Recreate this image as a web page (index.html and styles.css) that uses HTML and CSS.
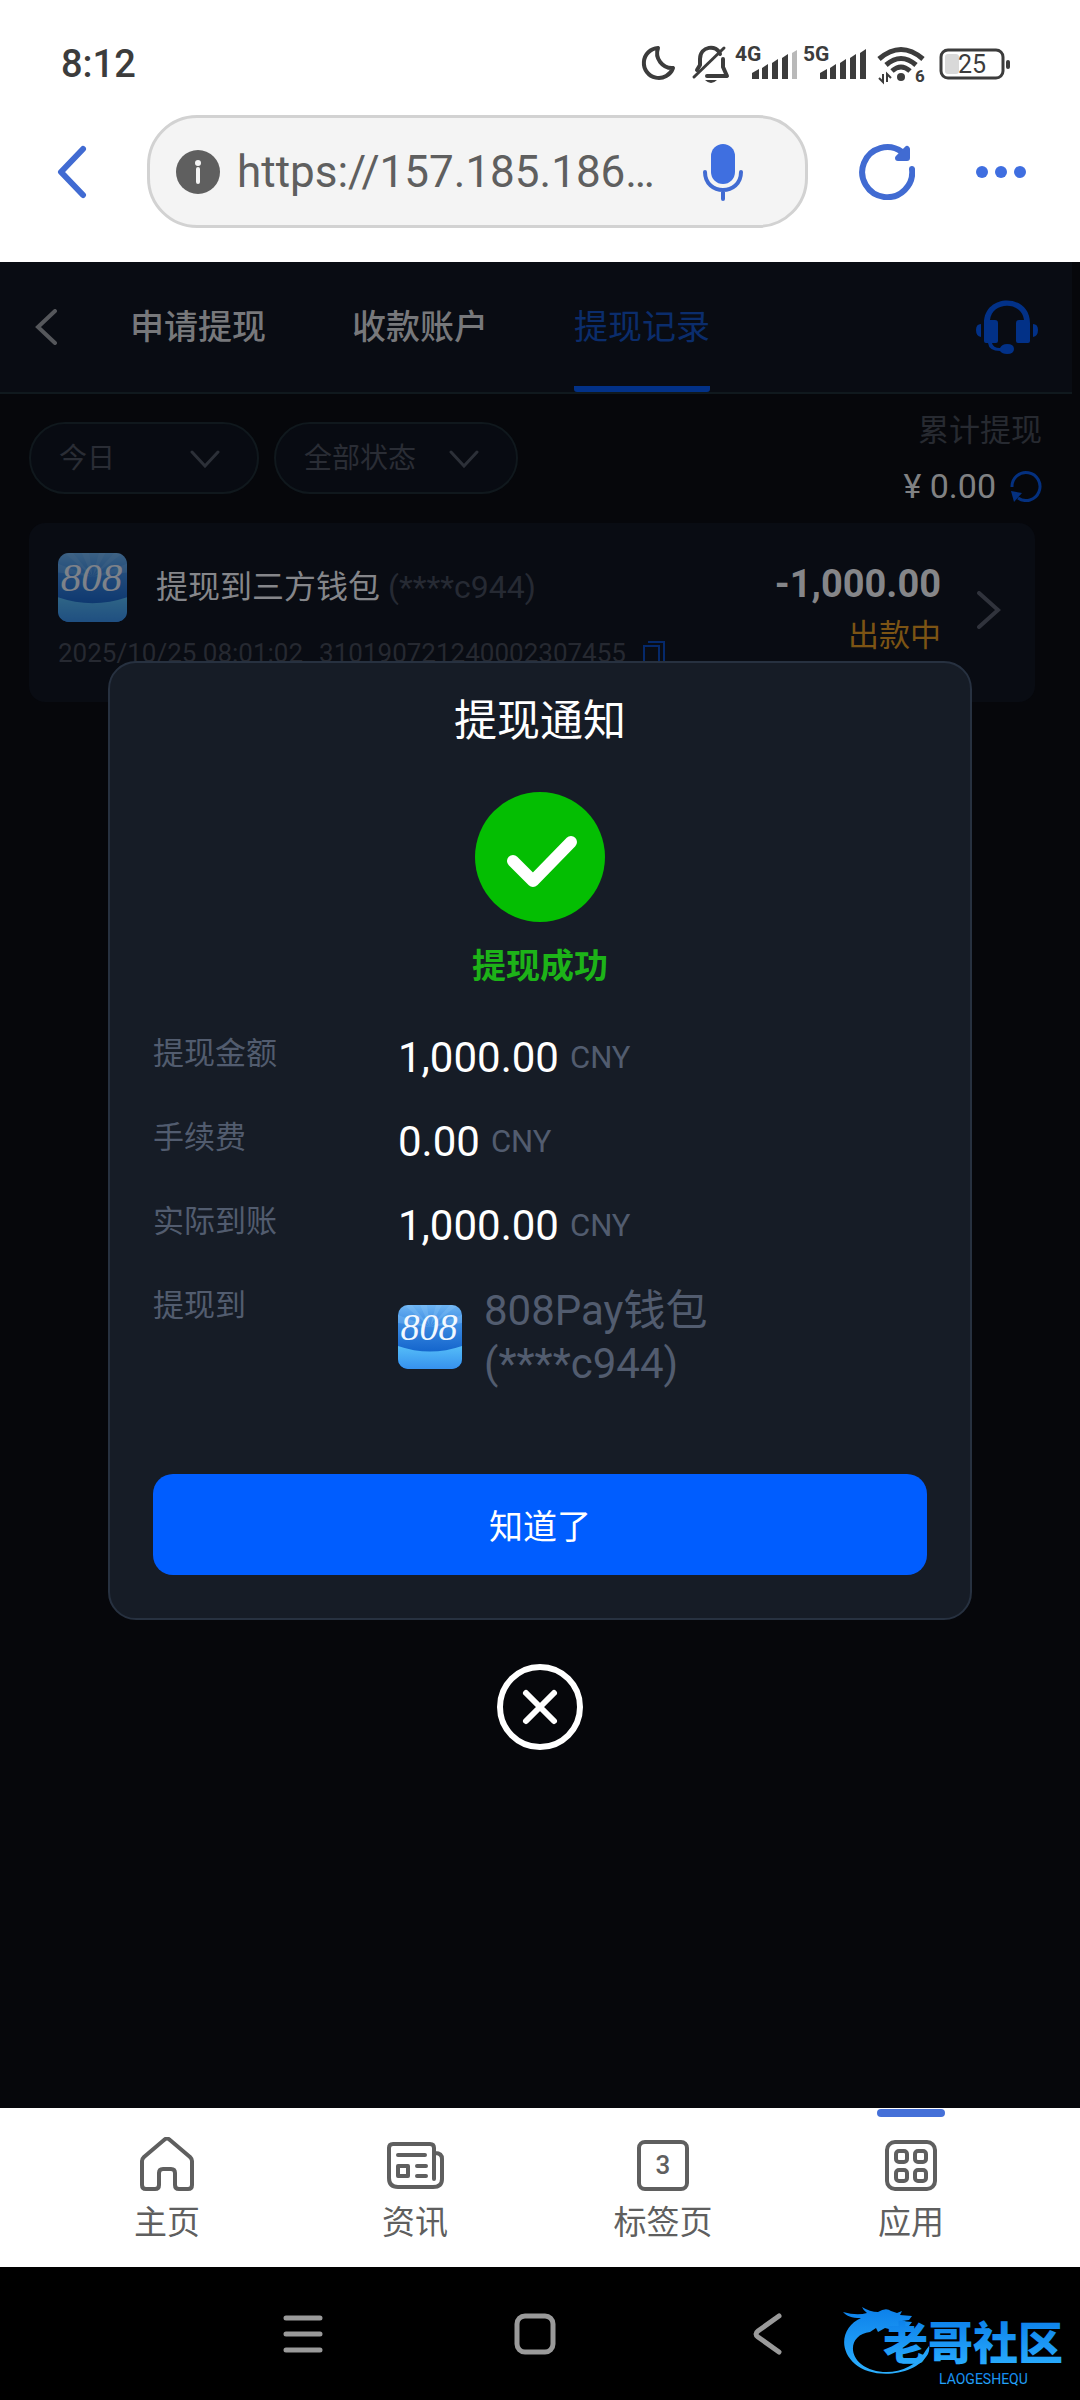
FILE: index.html
```html
<!DOCTYPE html>
<html lang="zh-CN">
<head>
<meta charset="utf-8">
<meta name="viewport" content="width=device-width, initial-scale=1">
<title>提现记录</title>
<link rel="stylesheet" href="styles.css">
</head>
<body>
<svg class="defs" width="0" height="0" aria-hidden="true">
  <defs>
    <linearGradient id="sky" x1="0" y1="0" x2="0" y2="1">
      <stop offset="0" stop-color="#6db4f3"/>
      <stop offset="0.3" stop-color="#3b8be2"/>
      <stop offset="0.75" stop-color="#1263cb"/>
    </linearGradient>
    <linearGradient id="sea" x1="0" y1="0" x2="0" y2="1">
      <stop offset="0" stop-color="#55bdf8"/>
      <stop offset="1" stop-color="#3691ee"/>
    </linearGradient>
    <linearGradient id="brand" x1="0" y1="0" x2="0" y2="1">
      <stop offset="0" stop-color="#0c80ea"/>
      <stop offset="1" stop-color="#2cb0ff"/>
    </linearGradient>
    <symbol id="wallet" viewBox="0 0 64 64">
      <clipPath id="tile"><rect width="64" height="64" rx="10"/></clipPath>
      <g clip-path="url(#tile)">
        <rect width="64" height="64" fill="url(#sky)"/>
        <path d="M32 22 6 0h8zM32 22 22 0h7zM32 22 38 0h6zM32 22 52 0h8zM32 22 0 10v8zM32 22 64 10v8z" fill="#8cc8fa" opacity=".3"/>
        <path d="M0 41q32 11 64 0v23H0z" fill="url(#sea)"/>
        <text x="31" y="35" text-anchor="middle" class="wallet-mark">808</text>
      </g>
    </symbol>
  </defs>
</svg>

<header class="browser">
  <div class="status">
    <span class="clock">8:12</span>
    <svg class="status-icons" width="370" height="60" viewBox="0 -10 370 60" aria-hidden="true">
      <g fill="none" stroke="#3c3c3c" stroke-width="4" stroke-linecap="round" stroke-linejoin="round">
        <path d="M17 4a15 15 0 1 0 15 20a15 15 0 0 1-15-20z"/>
        <path d="M56 26 59 21v-6c0-13 17-15 20-5M82 15v8l4 9H66"/>
        <path d="M83 4 53 33" stroke-width="3"/>
      </g>
      <path d="M64 36h12q-6 6-12 0z" fill="#3c3c3c"/>
      <text x="94" y="17" class="net">4G</text>
      <g fill="#3c3c3c">
        <path d="M111 29l7-4v10h-7zM121 24l6-4v15h-6zM131 19l6-4v20h-6zM141 14l6-4v25h-6z"/>
        <path d="M151 9l5-3v29h-5z" fill="#b9b9b9"/>
        <path d="M179 29l7-4v10h-7zM189 24l6-4v15h-6zM199 19l6-4v20h-6zM209 14l6-4v25h-6zM219 9l6-4v30h-6z"/>
      </g>
      <text x="162" y="17" class="net">5G</text>
      <g fill="none" stroke="#3c3c3c" stroke-width="5">
        <path d="M238 15q22-19 44 0M245 21q15-13 30 0M251 27q9-8 18 0"/>
      </g>
      <circle cx="260" cy="33" r="4" fill="#3c3c3c"/>
      <path d="M242 30v8l-4-4M246 38v-8l4 4" fill="none" stroke="#3c3c3c" stroke-width="2"/>
      <text x="274" y="38" class="net-small">6</text>
      <rect x="300" y="6" width="62" height="28" rx="7" fill="none" stroke="#3c3c3c" stroke-width="3"/>
      <rect x="304" y="10" width="14" height="20" rx="3" fill="#d9d9d9"/>
      <rect x="365" y="16" width="4" height="9" rx="2" fill="#3c3c3c"/>
      <text x="331" y="29" text-anchor="middle" class="battery">25</text>
    </svg>
  </div>
  <div class="toolbar">
    <button class="icon-btn" aria-label="返回">
      <svg width="30" height="54" viewBox="0 0 30 54"><path d="M26 4 4 27l22 23" fill="none" stroke="#416bd2" stroke-width="6" stroke-linecap="round" stroke-linejoin="round"/></svg>
    </button>
    <div class="address">
      <svg width="44" height="44" viewBox="0 0 44 44" aria-hidden="true"><circle cx="22" cy="22" r="22" fill="#5f5f5f"/><path d="M22 19v13" stroke="#f4f4f4" stroke-width="4" stroke-linecap="round"/><circle cx="22" cy="13" r="3" fill="#f4f4f4"/></svg>
      <input class="url" type="text" aria-label="网址" value="https://157.185.186…">
      <button class="icon-btn" aria-label="语音输入">
        <svg width="40" height="58" viewBox="0 0 40 58"><rect x="8" y="1" width="24" height="40" rx="12" fill="#3f6fe0"/><path d="M2 29c0 24 36 24 36 0M20 48v8" fill="none" stroke="#416bd2" stroke-width="4" stroke-linecap="round"/></svg>
      </button>
    </div>
    <button class="icon-btn refresh" aria-label="刷新">
      <svg width="56" height="56" viewBox="0 0 56 56" fill="none" stroke="#416bd2" stroke-width="6" stroke-linecap="round" stroke-linejoin="round"><path d="M53 25A25 25 0 1 1 43 8"/><path d="M48 5v9h-9l4-4z"/></svg>
    </button>
    <button class="icon-btn more" aria-label="更多">
      <svg width="52" height="14" viewBox="0 0 52 14" fill="#3f6ee0"><circle cx="7" cy="7" r="6"/><circle cx="26" cy="7" r="6"/><circle cx="45" cy="7" r="6"/></svg>
    </button>
  </div>
</header>

<main class="page">
  <div class="sheet">
    <nav class="tabs">
      <a class="tabs-back" href="#" aria-label="返回"><svg width="22" height="36" viewBox="0 0 22 36"><path d="M20 2 3 18l17 16" fill="none" stroke="#55575b" stroke-width="4" stroke-linecap="round"/></svg></a>
      <a class="tab" href="#">申请提现</a>
      <a class="tab" href="#">收款账户</a>
      <a class="tab tab-on" href="#" aria-current="page">提现记录</a>
      <a class="support" href="#" aria-label="客服"><svg width="62" height="56" viewBox="0 0 62 56" fill="#023187"><path d="M8 42V24C8-6 54-6 54 24v18q0 2-2 2H42q-2 0-2-2V24q0-3 3-3h5C46 2 16 2 14 21h5q3 0 3 3v18q0 2-2 2h-4q1 5 8 5 2-4 7-4 7 0 7 5t-7 5q-5 0-7-3-11 0-12-8H10q-2 0-2-2z"/><path d="M5 25v13q-5-1-5-7t5-6zM57 25v13q5-1 5-7t-5-6z"/></svg></a>
    </nav>
    <section class="filters">
      <div class="select-wrap">
        <select class="select select-day" aria-label="日期"><option>今日</option></select>
        <svg class="caret" width="30" height="18" viewBox="0 0 30 18" aria-hidden="true"><path d="M2 2l13 14L28 2"/></svg>
      </div>
      <div class="select-wrap">
        <select class="select select-state" aria-label="状态"><option>全部状态</option></select>
        <svg class="caret" width="30" height="18" viewBox="0 0 30 18" aria-hidden="true"><path d="M2 2l13 14L28 2"/></svg>
      </div>
      <div class="total">
        <div class="total-label">累计提现</div>
        <div class="total-value">¥ 0.00
          <button class="icon-btn" aria-label="刷新金额"><svg width="32" height="32" viewBox="0 0 32 32"><path d="M2 17A14 14 0 1 1 8 28" fill="none" stroke="#04307f" stroke-width="3"/><path d="M1 21l11 2-8 9z" fill="#04307f"/></svg></button>
        </div>
      </div>
    </section>
    <article class="record">
      <div class="record-main">
        <div class="record-head">
          <svg class="record-logo" width="69" height="69" aria-hidden="true"><use href="#wallet"/></svg>
          <h2 class="record-title">提现到三方钱包 <span class="dim">(****c944)</span></h2>
        </div>
        <div class="record-meta">
          <time>2025/10/25 08:01:02</time>
          <span>310190721240002307455</span>
          <button class="icon-btn" aria-label="复制"><svg width="24" height="28" viewBox="0 0 24 28" fill="none" stroke="#05296b" stroke-width="2"><rect x="2" y="7" width="15" height="19"/><path d="M6 3h16v20"/></svg></button>
        </div>
      </div>
      <div class="record-side">
        <div class="record-amount">-1,000.00</div>
        <div class="record-state">出款中</div>
      </div>
      <svg width="24" height="38" viewBox="0 0 24 38" aria-hidden="true"><path d="M2 2l19 17L2 36" fill="none" stroke="#30333c" stroke-width="4" stroke-linecap="round"/></svg>
    </article>
  </div>

  <div class="overlay">
    <section class="dialog" role="dialog" aria-labelledby="notice">
      <h1 class="dialog-title" id="notice">提现通知</h1>
      <svg class="ok" width="130" height="130" viewBox="0 0 130 130" aria-hidden="true"><circle cx="65" cy="65" r="65" fill="#04be02"/><path d="M38 69l20 20 38-39" fill="none" stroke="#fff" stroke-width="12" stroke-linecap="round" stroke-linejoin="round"/></svg>
      <p class="ok-text">提现成功</p>
      <dl class="details">
        <dt>提现金额</dt><dd>1,000.00 <small>CNY</small></dd>
        <dt>手续费</dt><dd>0.00 <small>CNY</small></dd>
        <dt>实际到账</dt><dd>1,000.00 <small>CNY</small></dd>
        <dt>提现到</dt>
        <dd class="payee">
          <svg width="64" height="64" aria-hidden="true"><use href="#wallet"/></svg>
          <span>808Pay钱包<br>(****c944)</span>
        </dd>
      </dl>
      <button class="confirm">知道了</button>
    </section>
    <button class="close" aria-label="关闭">
      <svg width="86" height="86" viewBox="0 0 86 86" fill="none" stroke="#fff" stroke-width="6" stroke-linecap="round"><circle cx="43" cy="43" r="40"/><path d="M29 29l28 28M57 29 29 57"/></svg>
    </button>
  </div>
</main>

<nav class="dock">
  <a class="dock-item" href="#">
    <svg width="58" height="56" viewBox="0 0 58 56"><path d="M26 3q3-3 6 0l20 17q2 2 2 4v24q0 4-4 4H41q-4 0-4-4V36q0-4-4-4h-8q-4 0-4 4v12q0 4-4 4H8q-4 0-4-4V24q0-2 2-4z"/></svg>
    主页
  </a>
  <a class="dock-item" href="#">
    <svg width="58" height="56" viewBox="0 0 58 56"><path d="M48 42V11q0-4-4-4H7q-4 0-4 4v30q0 9 9 9h35q9 0 9-8V22q0-6-7-6M12 18h27M31 29h9M31 39h9"/><rect x="12" y="29" width="10" height="10"/></svg>
    资讯
  </a>
  <a class="dock-item" href="#">
    <svg width="58" height="56" viewBox="0 0 58 56"><rect x="5" y="5" width="48" height="47" rx="6"/><text x="29" y="37" text-anchor="middle" class="tab-count">3</text></svg>
    标签页
  </a>
  <a class="dock-item dock-on" href="#">
    <svg width="58" height="56" viewBox="0 0 58 56"><rect x="5" y="5" width="48" height="47" rx="8"/><g><rect x="14" y="14" width="11" height="11" rx="3"/><rect x="33" y="14" width="11" height="11" rx="3"/><rect x="14" y="33" width="11" height="11" rx="3"/><rect x="33" y="33" width="11" height="11" rx="3"/></g></svg>
    应用
  </a>
</nav>

<footer class="system">
  <button class="icon-btn" aria-label="最近任务"><svg width="40" height="42" viewBox="0 0 40 42"><path d="M3 5h34M3 21h34M3 37h34"/></svg></button>
  <button class="icon-btn" aria-label="主屏幕"><svg width="42" height="42" viewBox="0 0 42 42"><rect x="3" y="3" width="36" height="36" rx="8"/></svg></button>
  <button class="icon-btn" aria-label="后退"><svg width="40" height="42" viewBox="0 0 40 42"><path d="M32 3 11 18q-4 3 0 6l21 15"/></svg></button>
  <svg class="brand" width="224" height="84" viewBox="0 0 224 84" role="img" aria-label="老哥社区">
    <g fill="url(#brand)">
      <path d="M0 6q14 4 24 1-4-3-5-6 8 5 16 5 8-5 13-1l6 2 5-2-2 4 12 1-3 4-7 1 10 1-3 4-10 1-6 3-8-2-7 4-2-4-6 4C9 28 4 46 18 58c18 14 52 10 65-14l3-4q1 3-1 8C73 70 30 74 12 58-6 42 0 20 18 12 8 12 4 10 0 6z"/>
      <text x="40" y="54" class="brand-name">老哥社区</text>
      <text x="96" y="78" class="brand-sub">LAOGESHEQU</text>
    </g>
  </svg>
</footer>
</body>
</html>
```
FILE: styles.css
```css
* { box-sizing: border-box; }

body {
  margin: 0;
  min-height: 100vh;
  display: flex;
  flex-direction: column;
  background: #06070b;
  font-family: Roboto, "Noto Sans CJK SC", sans-serif;
  font-size: 32px;
}

a { color: inherit; text-decoration: none; }
svg { display: block; flex: none; }
.defs { position: absolute; }
h1, h2, p, dl, dd { margin: 0; font-weight: 400; }
button, input, select { font: inherit; color: inherit; }

.icon-btn {
  flex: none;
  padding: 0;
  border: 0;
  background: none;
  cursor: pointer;
}

/* Browser chrome */
.browser { background: #fff; padding-bottom: 34px; }
.status {
  display: flex;
  justify-content: space-between;
  align-items: center;
  padding: 13px 69px 0 61px;
  height: 115px;
  color: #3c3c3c;
}
.clock { font-size: 38px; font-weight: 500; }
.net { font-size: 21px; font-weight: 700; fill: #3c3c3c; }
.net-small { font-size: 17px; font-weight: 700; fill: #3c3c3c; }
.battery { font-size: 25px; fill: #3c3c3c; }
.toolbar {
  display: flex;
  align-items: center;
  padding: 0 53px 0 57px;
}
.address {
  flex: 1;
  min-width: 0;
  display: flex;
  align-items: center;
  height: 113px;
  margin: 0 51px 0 60px;
  padding: 0 62px 0 26px;
  border: 3px solid #d2d2d2;
  border-radius: 50px;
  background: #f4f4f4;
}
.url {
  flex: 1;
  min-width: 0;
  margin: 0 36px 0 17px;
  padding: 0;
  border: 0;
  background: none;
  color: #5f5f5f;
  font-size: 44px;
  text-overflow: ellipsis;
}
.more { margin-left: 60px; }

/* Withdrawal page, shown dimmed behind the dialog */
.page { flex: 1; position: relative; }
.sheet { margin-right: 8px; }
.tabs {
  display: flex;
  align-items: stretch;
  height: 132px;
  padding: 0 34px 0 35px;
  background: #090c13;
  border-bottom: 2px solid #10191e;
}
.tabs-back { display: flex; align-items: center; margin-right: 73px; }
.tab {
  margin-right: 86px;
  font-size: 34px;
  font-weight: 500;
  line-height: 130px;
  height: 130px;
  color: #77787b;
}
.tab-on {
  font-weight: 400;
  color: #0b2d6c;
  border-bottom: 6px solid #023187;
  border-radius: 3px;
}
.support { display: flex; align-items: center; margin-left: auto; }

.filters {
  display: flex;
  align-items: flex-start;
  gap: 15px;
  padding: 0 30px 0 29px;
  height: 129px;
}
.select-wrap { position: relative; margin-top: 28px; }
.select {
  appearance: none;
  height: 72px;
  padding: 0 28px;
  border: 2px solid #10181d;
  border-radius: 36px;
  background: #080b12;
  color: #2a2d35;
  font-size: 28px;
}
.select-day { width: 230px; }
.select-state { width: 244px; }
.caret {
  position: absolute;
  right: 39px;
  top: 28px;
  pointer-events: none;
  fill: none;
  stroke: #2c3038;
  stroke-width: 3;
  stroke-linecap: round;
}
.total { margin-left: auto; padding-top: 12px; text-align: right; }
.total-label { font-size: 31px; line-height: 50px; color: #272a31; }
.total-value {
  display: flex;
  justify-content: flex-end;
  align-items: center;
  gap: 14px;
  height: 60px;
  font-size: 34px;
  color: #808183;
}

.record {
  display: flex;
  align-items: center;
  gap: 36px;
  margin: 0 37px 0 29px;
  padding: 0 34px 5px 29px;
  height: 179px;
  border-radius: 16px;
  background: #090c13;
}
.record-main { flex: 1; }
.record-head { display: flex; align-items: center; gap: 29px; }
.record-logo { opacity: .5; }
.record-title { font-size: 32px; line-height: 48px; color: #85868a; }
.dim { color: #262a33; }
.record-meta {
  display: flex;
  align-items: center;
  gap: 16px;
  margin-top: 16px;
  height: 30px;
  font-size: 26px;
  color: #262931;
  white-space: nowrap;
}
.record-side { text-align: right; line-height: 52px; }
.record-amount { font-size: 38px; font-weight: 700; color: #858689; }
.record-state { font-size: 31px; color: #7c5414; }

/* Dialog */
.overlay {
  position: absolute;
  inset: 0;
  display: flex;
  flex-direction: column;
  align-items: center;
  padding-top: 399px;
}
.dialog {
  width: 80%;
  padding: 28px 43px 43px;
  border: 2px solid #273140;
  border-radius: 28px;
  background: #161c26;
  color: #fff;
}
.dialog-title { font-size: 43px; line-height: 60px; text-align: center; }
.ok { margin: 41px auto 20px; }
.ok-text {
  font-size: 34px;
  font-weight: 700;
  line-height: 48px;
  text-align: center;
  color: #1db318;
}
.details {
  display: grid;
  grid-template-columns: 245px 1fr;
  margin: 26px 0 84px;
}
.details dt { font-size: 31px; line-height: 76px; color: #525c6f; }
.details dd {
  display: flex;
  align-items: center;
  gap: 11px;
  font-size: 42px;
  line-height: 84px;
}
.details small { font-size: 31px; color: #525c6f; }
.details .payee {
  gap: 22px;
  padding-top: 16px;
  line-height: 53px;
  color: #525c6f;
}
.confirm {
  display: block;
  width: 100%;
  height: 101px;
  border: 0;
  border-radius: 20px;
  background: #005dff;
  color: #fff;
  font-size: 34px;
}
.close { margin-top: 44px; padding: 0; border: 0; background: none; }

/* Bottom bars */
.dock {
  display: flex;
  height: 159px;
  padding: 0 45px 0 43px;
  background: #fff;
  color: #5f5f5f;
  font-size: 33px;
  line-height: 48px;
}
.dock-item {
  position: relative;
  flex: 1;
  display: flex;
  flex-direction: column;
  align-items: center;
  gap: 6px;
  padding-top: 29px;
}
.dock-item svg {
  fill: none;
  stroke: #5f5f5f;
  stroke-width: 4;
  stroke-linecap: round;
  stroke-linejoin: round;
}
.dock-item .tab-count { font-size: 26px; font-weight: 500; fill: #5f5f5f; stroke: none; }
.dock-on::before {
  content: "";
  position: absolute;
  top: 1px;
  width: 68px;
  height: 8px;
  border-radius: 4px;
  background: #4570d8;
}

.system {
  display: flex;
  align-items: center;
  gap: 191px;
  height: 133px;
  padding: 0 15px 0 283px;
  background: #000;
}
.system .icon-btn svg {
  fill: none;
  stroke: #9a9a9a;
  stroke-width: 5;
  stroke-linecap: round;
}
.system .brand { margin: 28px 0 0 -135px; }
.brand-name { font-size: 45px; font-weight: 900; }
.brand-sub { font-size: 14px; }
.wallet-mark {
  font-family: "Liberation Serif", serif;
  font-size: 38px;
  font-style: italic;
  fill: #f2f8ff;
}
```
